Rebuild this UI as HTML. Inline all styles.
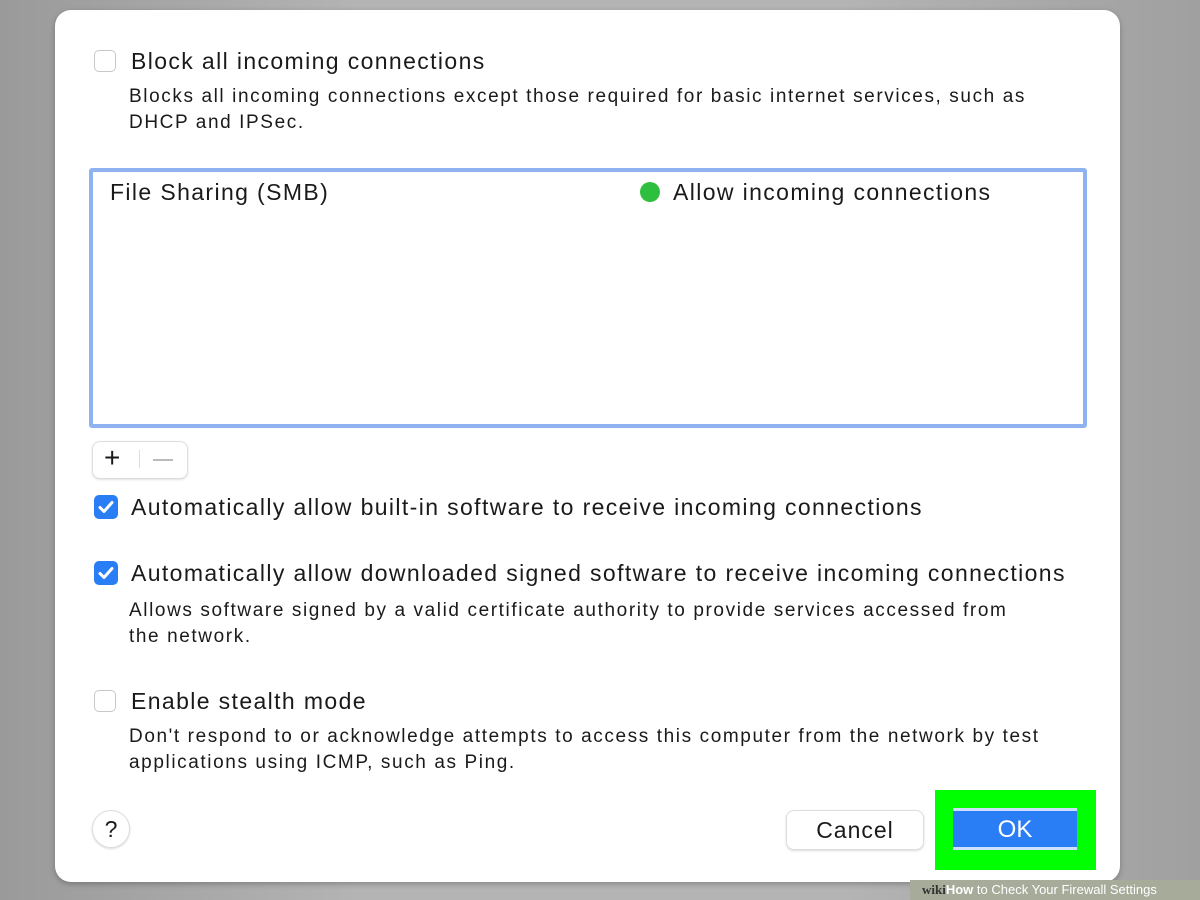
<!DOCTYPE html><html><head><style>
body{margin:0;width:1200px;height:900px;background:linear-gradient(90deg,#9a9a9a,#b4b4b4 30%,#b4b4b4 70%,#a0a0a0);position:relative;overflow:hidden;font-family:"Liberation Sans",sans-serif;color:#1a1a1a}
.dlg{position:absolute;left:55px;top:10px;width:1065px;height:872px;background:#fff;border-radius:16px;box-shadow:0 2px 6px rgba(0,0,0,.25)}
.t{position:absolute;font-size:23px;white-space:nowrap;letter-spacing:1.38px}
.s{position:absolute;font-size:19px;line-height:26px;letter-spacing:1.6px}
.cb{position:absolute;width:22px;height:22px;border:1.5px solid #c8c8c8;border-radius:5px;background:#fff;box-sizing:border-box}
.cbc{position:absolute;width:24px;height:24px;border-radius:5px;background:#2a7ef5}
.list{position:absolute;left:89px;top:168px;width:998px;height:260px;border:4px solid #8fb3f0;box-sizing:border-box;border-radius:3px}
</style></head><body>
<div class="dlg"></div>
<div class="cb" style="left:94px;top:50px"></div>
<div class="t" style="left:131px;top:48px">Block all incoming connections</div>
<div class="s" style="left:129px;top:84px;width:905px">Blocks all incoming connections except those required for basic internet services, such as DHCP and IPSec.</div>
<div class="list"></div>
<div class="t" style="left:110px;top:179px">File Sharing (SMB)</div>
<div style="position:absolute;left:640px;top:182px;width:20px;height:20px;border-radius:50%;background:#2fbf3f"></div>
<div class="t" style="left:673px;top:179px">Allow incoming connections</div>
<div style="position:absolute;left:92px;top:441px;width:94px;height:36px;border:1px solid #ddd;border-radius:8px;box-shadow:0 1px 2px rgba(0,0,0,.12);background:#fff"></div>
<div class="t" style="left:104px;top:442px;font-size:28px;font-weight:300">+</div>
<div style="position:absolute;left:139px;top:450px;width:1px;height:18px;background:#ddd"></div>
<div style="position:absolute;left:153px;top:459px;width:20px;height:1.5px;background:#bbb"></div>
<svg class="cbc" style="left:94px;top:495px" viewBox="0 0 24 24"><path d="M6 12.5l4 4 8-9" stroke="#fff" stroke-width="3" fill="none" stroke-linecap="round" stroke-linejoin="round"/></svg>
<div class="t" style="left:131px;top:494px">Automatically allow built-in software to receive incoming connections</div>
<svg class="cbc" style="left:94px;top:561px" viewBox="0 0 24 24"><path d="M6 12.5l4 4 8-9" stroke="#fff" stroke-width="3" fill="none" stroke-linecap="round" stroke-linejoin="round"/></svg>
<div class="t" style="left:131px;top:560px">Automatically allow downloaded signed software to receive incoming connections</div>
<div class="s" style="left:129px;top:598px;width:888px">Allows software signed by a valid certificate authority to provide services accessed from the network.</div>
<div class="cb" style="left:94px;top:690px"></div>
<div class="t" style="left:131px;top:688px">Enable stealth mode</div>
<div class="s" style="left:129px;top:724px;width:935px">Don't respond to or acknowledge attempts to access this computer from the network by test applications using ICMP, such as Ping.</div>
<div style="position:absolute;left:92px;top:810px;width:36px;height:36px;border-radius:50%;border:1px solid #ddd;box-shadow:0 1px 2px rgba(0,0,0,.15);text-align:center;line-height:36px;font-size:23px;background:#fff">?</div>
<div style="position:absolute;left:786px;top:810px;width:136px;height:38px;border-radius:8px;border:1px solid #ddd;box-shadow:0 1px 2px rgba(0,0,0,.15);text-align:center;line-height:38px;font-size:23px;letter-spacing:1px;background:#fff">Cancel</div>
<div style="position:absolute;left:935px;top:790px;width:161px;height:80px;background:#0f0"></div>
<div style="position:absolute;left:953px;top:808px;width:124px;height:42px;background:#2a7ef5;border-top:3px solid #cfe0ff;border-bottom:3px solid #cfe0ff;box-sizing:border-box;color:#fff;text-align:center;line-height:38px;font-size:24px">OK</div>
<div style="position:absolute;left:910px;top:880px;width:290px;height:20px;background:#a6ab9a;color:#fff;font-size:13px;line-height:20px;padding-left:12px;box-sizing:border-box"><b style="font-family:'Liberation Serif',serif;color:#333">wiki</b><b>How</b> to Check Your Firewall Settings</div>
</body></html>
